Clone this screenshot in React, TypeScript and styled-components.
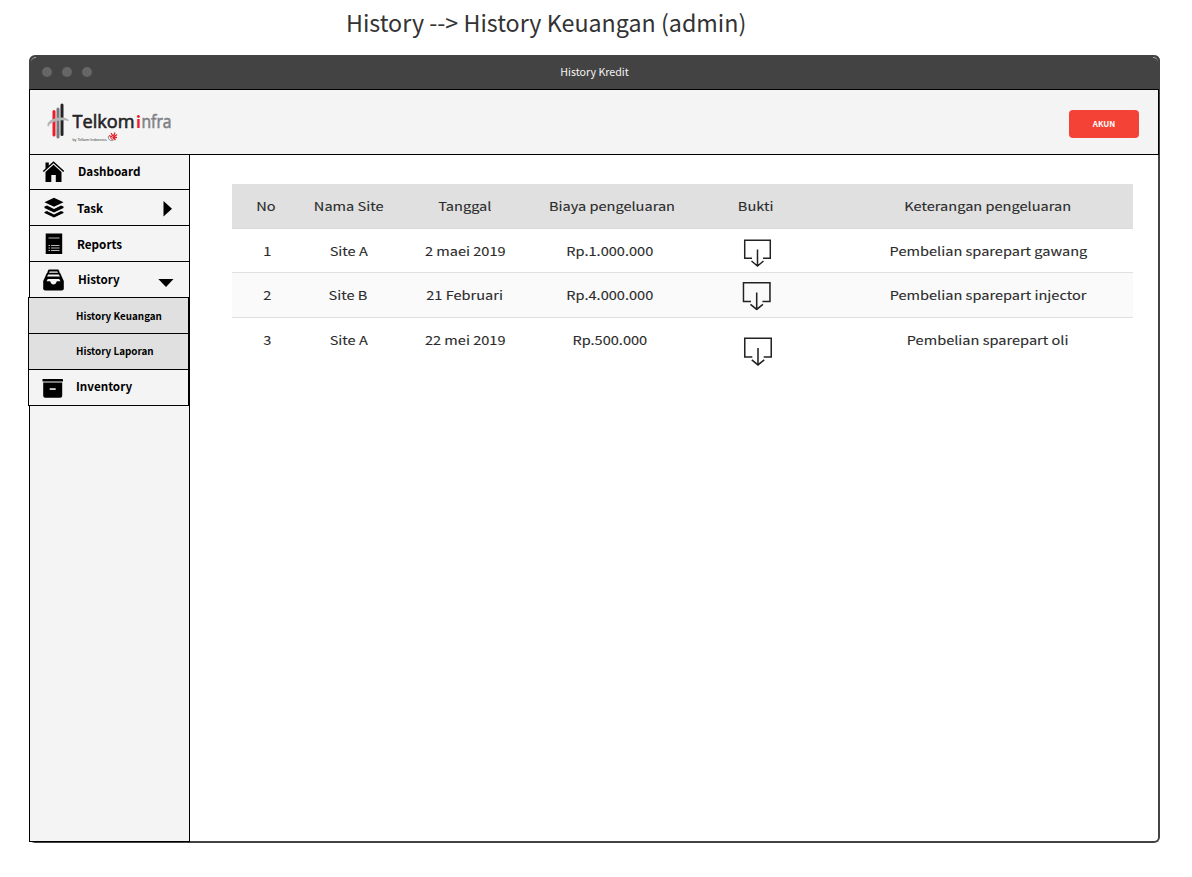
import React from "react";
import styled, { createGlobalStyle } from "styled-components";

const GlobalStyle = createGlobalStyle`
  * { box-sizing: border-box; }
  body {
    margin: 0;
    background: #fff;
    color: #000;
    font-family: "Noto Sans CJK SC", "Noto Sans", sans-serif;
  }
`;

const Page = styled.div`
  width: 1192px;
  height: 877px;
  overflow: hidden;
  display: flex;
  flex-direction: column;
`;

const PageTitle = styled.h1`
  margin: 0;
  height: 55px;
  padding: 4px 0 0 346px;
  font-size: 23.26px;
  line-height: 36px;
  font-weight: 400;
  color: #333;
  white-space: nowrap;
`;

const Window = styled.div`
  width: 1131px;
  height: 788px;
  margin-left: 29px;
  display: flex;
  flex-direction: column;
  border: solid #434343;
  border-width: 0 2px 2px 0;
  border-radius: 6px;
`;

const TitleBar = styled.div`
  position: relative;
  display: flex;
  align-items: center;
  height: 34px;
  flex: none;
  margin-right: -2px;
  padding-left: 13px;
  gap: 10px;
  background: #434343;
  border-radius: 6px 6px 0 0;
`;

const Glint = styled.span<{ $side: "left" | "right" }>`
  position: absolute;
  top: 2px;
  ${(p) => p.$side}: 2px;
  width: 5px;
  height: 5px;
  border-top: 1px solid #aaa;
  border-top-${(p) => p.$side}-radius: 5px;
`;

const Dot = styled.span`
  width: 10px;
  height: 10px;
  margin-bottom: 1px;
  border-radius: 50%;
  background: #666;
`;

const WindowTitle = styled.span`
  flex: 1;
  padding: 0 73px 0 0;
  text-align: center;
  font-size: 10.67px;
  line-height: 16px;
  color: #f4f4f4;
`;

const Header = styled.header`
  display: flex;
  align-items: center;
  justify-content: space-between;
  height: 66px;
  flex: none;
  margin-right: -1px;
  padding: 0 19px 0 15px;
  background: #f4f4f4;
  border: 1px solid #000;
`;

const AccountButton = styled.button`
  width: 70px;
  height: 28px;
  margin-top: 3px;
  padding: 0;
  border: 0;
  border-radius: 4px;
  background: #f44336;
  color: #fff;
  font: bold 8px/28px "Noto Sans CJK SC", sans-serif;
`;

const Body = styled.div`
  flex: 1;
  display: flex;
`;

const Sidebar = styled.nav`
  width: 161px;
  margin-bottom: -1px;
  background: #f4f4f4;
  border: solid #000;
  border-width: 0 1px 1px 1px;
`;

const NavItem = styled.div<{ $height?: number; $pad?: number; $gap?: number }>`
  display: flex;
  align-items: center;
  height: ${(p) => p.$height ?? 36}px;
  padding: 0 15px 0 ${(p) => p.$pad ?? 12}px;
  gap: ${(p) => p.$gap ?? 12}px;
  border-bottom: 1px solid #000;
  svg { flex: none; }
`;

const NavLabel = styled.span<{ $lift?: number }>`
  flex: 1;
  padding-bottom: ${(p) => p.$lift ?? 2}px;
  font-size: 11.67px;
  line-height: 18px;
  font-weight: 700;
  white-space: nowrap;
`;

const OpenGroup = styled.div`
  width: 161px;
  margin: -1px 0 0 -2px;
  border: 1px solid #000;
  border-bottom: 0;
  background: #f4f4f4;
`;

const SubItem = styled.div<{ $line?: number }>`
  height: 36px;
  padding-left: 47px;
  background: #e0e0e0;
  border-bottom: 1px solid #000;
  font-size: 9.83px;
  line-height: ${(p) => p.$line ?? 37}px;
  font-weight: 700;
`;

const Content = styled.main`
  flex: 1;
  padding: 29px 0 0 42px;
`;

const Table = styled.div`
  width: 901px;
`;

const Row = styled.div<{ $kind?: "head" | "odd" | "even"; $last?: boolean }>`
  display: grid;
  grid-template-columns: 68px 97px 136px 156px 133px 21px 290px;
  align-items: center;
  height: ${(p) => (p.$kind === "odd" ? 44 : 45)}px;
  background: ${(p) => (p.$kind === "head" ? "#e0e0e0" : p.$kind === "even" ? "#fafafa" : "#fff")};
  border-bottom: ${(p) => (p.$last ? "0" : p.$kind === "head" ? "1px solid #d9d9d9" : "1px solid #e0e0e0")};
`;

const Cell = styled.div<{ $col?: number; $shift?: number; $back?: number }>`
  display: flex;
  justify-content: center;
  ${(p) => (p.$col ? `grid-column: ${p.$col};` : "")}
  padding-left: ${(p) => p.$shift ?? 0}px;
  padding-right: ${(p) => p.$back ?? 0}px;
  font-size: 12px;
  line-height: 18px;
  color: #2b2b2b;
  -webkit-text-stroke: 0.1px #2b2b2b;
  white-space: nowrap;
`;

const Wide = styled.span`
  transform: scaleX(1.214);
`;

const Receipt = styled.svg<{ $x: number; $y: number }>`
  transform: translate(${(p) => p.$x}px, ${(p) => p.$y}px);
`;

const Wordmark = styled.text`
  font-family: "Open Sans", "Noto Sans", sans-serif;
  font-size: 18px;
  font-weight: 400;
  stroke-width: 0.6px;
`;

const Byline = styled.text`
  font-family: "Liberation Sans", sans-serif;
  font-size: 4px;
`;

const Logo = () => (
  <svg width="136" height="44" viewBox="45 100 136 44">
    <g strokeWidth="3" strokeLinecap="round">
      <path d="M54 111.500V135" stroke="#ed1c2b" />
      <path d="M58 109V137" stroke="#77787b" />
      <path d="M62 105V134.500" stroke="#252326" />
    </g>
    <path d="M48.200 127.400C45 122 53 118 60 117.600C65 117.400 68.500 118.600 69 121.300C65 119.600 57 120 52.500 122.500C49.500 124.200 48.300 125.600 48.200 127.400Z" fill="#b4b5b7" />
    <Wordmark x="72.500" y="127.500" fill="#252326" stroke="#252326" textLength="62" lengthAdjust="spacingAndGlyphs">Telkom</Wordmark>
    <Wordmark x="136.200" y="127.500" fill="#ee1c2b">
      <tspan fontFamily="Lato" fontSize="17" fontWeight="900">i</tspan>
    </Wordmark>
    <Wordmark x="141.500" y="127.500" fill="#808184" stroke="#808184" textLength="30" lengthAdjust="spacingAndGlyphs">nfra</Wordmark>
    <Byline x="72.500" y="141" fill="#444" textLength="34" lengthAdjust="spacingAndGlyphs">by Telkom Indonesia</Byline>
    <g fill="none" stroke="#e3232c">
      <path d="M109 135.500L112 137M111 133L113 136M115 132.500L113.500 136M117 134.500L113.500 137M117 137.500H113M115.500 140L112.500 137" strokeWidth="1.300" />
      <path d="M108.500 136C107.500 139 110 141.500 113.500 140.300" stroke="#77787b" strokeWidth=".8" />
      <circle cx="112.500" cy="137.500" r="1.800" strokeWidth="1" />
    </g>
  </svg>
);

const HouseIcon = () => (
  <svg width="22" height="22" viewBox="-.5 0 22 22">
    <path d="M3 8V1.500H6.300V5" />
    <path d="M.8 10.500L11 1.300L21.200 10.500" fill="none" stroke="#000" strokeWidth="1.500" />
    <path d="M11 3.700L19 10.900V21H13.300V14H8.800V21H3V10.900Z" />
  </svg>
);

const LayersIcon = () => (
  <svg width="22" height="22" viewBox="0 0 22 22">
    <path d="M11 .7L20.500 5.200L11 9.700L1.500 5.200Z" />
    <path d="M1.500 9.500L4 8.500L11 12L18 8.500L20.500 9.500V11L11 15.500L1.500 11Z" />
    <path d="M1.500 15L4 14L11 17.500L18 14L20.500 15V16L11 20.500L1.500 16Z" />
  </svg>
);

const ReportIcon = () => (
  <svg width="22" height="22" viewBox="0 0 22 22">
    <rect x="2.700" y=".5" width="16.500" height="20.500" />
    <path d="M5.500 5H16.500M8 12.500H16.500M8 15H16.500M8 17.500H16.500M5.500 12.500H7M5.500 15H7M5.500 17.500H7" stroke="#ccc" strokeWidth=".9" />
  </svg>
);

const HistoryIcon = () => (
  <svg width="22" height="22" viewBox="-.5 0 22 22">
    <path d="M5.500 4L6.500 1.500H15.500L16.500 4M3.500 8L5 4.700H17L18.500 8" fill="none" stroke="#000" strokeWidth="1.800" strokeLinejoin="round" />
    <path d="M2.800 7.500H19.200L21.300 12V19.500Q21.300 21.500 19.300 21.500H2.700Q.7 21.500 .7 19.500V12Z" />
    <path d="M4 12.300L5.300 10H16.700L18 12.300H14.300Q13.300 15.500 11 15.500Q8.700 15.500 7.700 12.300Z" fill="#f4f4f4" />
  </svg>
);

const BoxIcon = () => (
  <svg width="22" height="22" viewBox="0 0 22 22">
    <rect x=".5" y="2" width="20.500" height="2.600" rx=".6" />
    <path d="M1.200 5.600H20.200V18.800Q20.200 20.800 18.200 20.800H3.200Q1.200 20.800 1.200 18.800Z" />
    <rect x="7.700" y="11.300" width="6" height="1.500" fill="#fff" />
  </svg>
);

const ArrowRight = () => (
  <svg width="12" height="18" viewBox="0 0 12 18"><path d="M1.500 2L10 9.700L1.500 17.400Z" /></svg>
);

const ArrowDown = () => (
  <svg width="16" height="16" viewBox="0 0 16 16"><path d="M.3 7H15.500L8 15Z" /></svg>
);

const ReceiptIcon = ({ x, y, size = 28 }: { x: number; y: number; size?: number }) => (
  <Receipt $x={x} $y={y} width={size} height={size} viewBox="0 0 28 28" fill="none" stroke="#222" strokeWidth="1.500">
    <path d="M8.500 19.300H1.200V1.200H26.800V19.300H19.500M14 10.500V26.500M8 22L14 27L20 22" />
  </Receipt>
);

const entries = [
  { no: "1", site: "Site A", date: "2 maei 2019", cost: "Rp.1.000.000", note: "Pembelian sparepart gawang", x: 1.5, y: 2, size: 28 },
  { no: "2", site: "Site B", date: "21 Februari", cost: "Rp.4.000.000", note: "Pembelian sparepart injector", x: 1.2, y: 0.5, size: 29 },
  { no: "3", site: "Site A", date: "22 mei 2019", cost: "Rp.500.000", note: "Pembelian sparepart oli", x: 2.5, y: 11, size: 29 },
];

export default function App() {
  return (
    <Page>
      <GlobalStyle />
      <PageTitle>History --&gt; History Keuangan (admin)</PageTitle>
      <Window>
        <TitleBar>
          <Glint $side="left" />
          <Dot />
          <Dot />
          <Dot />
          <WindowTitle>History Kredit</WindowTitle>
          <Glint $side="right" />
        </TitleBar>
        <Header>
          <Logo />
          <AccountButton>AKUN</AccountButton>
        </Header>
        <Body>
          <Sidebar>
            <NavItem $height={35} $gap={14}><HouseIcon /><NavLabel>Dashboard</NavLabel></NavItem>
            <NavItem $pad={13}><LayersIcon /><NavLabel $lift={0}>Task</NavLabel><ArrowRight /></NavItem>
            <NavItem $pad={13}><ReportIcon /><NavLabel $lift={0}>Reports</NavLabel></NavItem>
            <NavItem $gap={14}><HistoryIcon /><NavLabel>History</NavLabel><ArrowDown /></NavItem>
            <OpenGroup>
              <SubItem>History Keuangan</SubItem>
              <SubItem $line={35}>History Laporan</SubItem>
              <NavItem $pad={13}><BoxIcon /><NavLabel $lift={4}>Inventory</NavLabel></NavItem>
            </OpenGroup>
          </Sidebar>
          <Content>
            <Table>
              <Row $kind="head">
                <Cell><Wide>No</Wide></Cell>
                <Cell><Wide>Nama Site</Wide></Cell>
                <Cell><Wide>Tanggal</Wide></Cell>
                <Cell $shift={1}><Wide>Biaya pengeluaran</Wide></Cell>
                <Cell><Wide>Bukti</Wide></Cell>
                <Cell $col={7}><Wide>Keterangan pengeluaran</Wide></Cell>
              </Row>
              {entries.map((e, i) => (
                <Row key={e.no} $kind={i % 2 ? "even" : "odd"} $last={i === entries.length - 1}>
                  <Cell $shift={3}><Wide>{e.no}</Wide></Cell>
                  <Cell><Wide>{e.site}</Wide></Cell>
                  <Cell><Wide>{e.date}</Wide></Cell>
                  <Cell $back={2}><Wide>{e.cost}</Wide></Cell>
                  <Cell><ReceiptIcon x={e.x} y={e.y} size={e.size} /></Cell>
                  <Cell $col={7}><Wide>{e.note}</Wide></Cell>
                </Row>
              ))}
            </Table>
          </Content>
        </Body>
      </Window>
    </Page>
  );
}
